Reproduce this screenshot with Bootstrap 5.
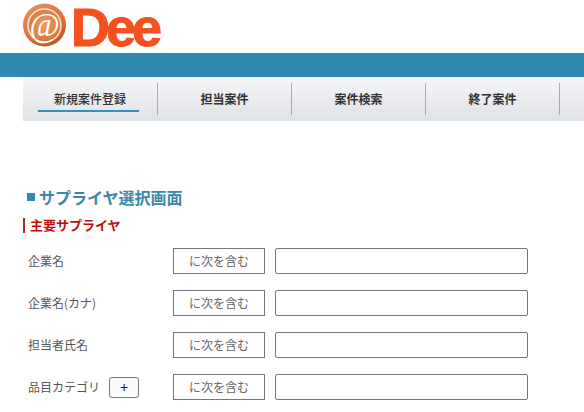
<!DOCTYPE html>
<html lang="ja">
<head>
  <meta charset="UTF-8" />
  <meta name="viewport" content="width=device-width, initial-scale=1.0"/>
  <title>サプライヤ選択画面</title>
  <link href="https://cdn.jsdelivr.net/npm/bootstrap@5.3.2/dist/css/bootstrap.min.css" rel="stylesheet">
  <style>
    body {
      font-family: "Noto Sans CJK JP", "Liberation Sans", sans-serif;
      color: #555;
      font-size: 12px;
      overflow: hidden;
    }
    .logo-area {
      height: 53px;
      padding: 3px 0 0 23px;
    }
    .logo-svg {
      overflow: visible;
    }
    .logo-text {
      font-family: "Liberation Sans", sans-serif;
      font-weight: 700;
      font-size: 54px;
      fill: #f4511e;
      stroke: #f4511e;
      stroke-width: 1px;
    }
    .top-band {
      height: 24px;
      background: #2e8aaf;
    }
    .menu-bar {
      margin-left: 23px;
      height: 44px;
      background: linear-gradient(#f5f6f8, #dfe2e6);
    }
    .menu-item {
      width: 134px;
      flex: none;
      height: 32px;
      margin-top: 6px;
      border-right: 1px solid #a9acaf;
      font-size: 12px;
      font-weight: 700;
      color: #333;
      text-align: center;
      line-height: 32px;
    }
    .menu-active {
      width: 135px;
      position: relative;
      font-weight: 500;
    }
    .menu-active::after {
      content: "";
      position: absolute;
      left: 15px;
      right: 18px;
      bottom: 3px;
      height: 2px;
      background: #3a8fb3;
    }
    .page-title {
      margin: 66px 0 0 27px;
      gap: 4px;
      font-size: 16px;
      line-height: 20px;
      font-weight: 700;
      color: #3a87a8;
    }
    .title-square {
      width: 8px;
      height: 8px;
      background: #2e8aaf;
    }
    .sub-title {
      margin: 11px 0 0 23px;
      padding: 0 0 1px 5px;
      border-left: 2px solid #b5261e;
      font-size: 13px;
      line-height: 14px;
      font-weight: 700;
      color: #c00d0d;
    }
    .search-rows {
      margin: 15px 0 0 28px;
      gap: 16px;
    }
    .search-row {
      height: 26px;
    }
    .field-name {
      width: 145px;
      flex: none;
      font-size: 12px;
      gap: 9px;
    }
    .plus-btn {
      width: 30px;
      height: 21px;
      padding: 0;
      font-size: 14px;
      line-height: 18px;
      color: #222;
      background: #fafafa;
      border: 1px solid #777;
      border-radius: 3px;
    }
    .cond-box {
      width: 92px;
      height: 26px;
      flex: none;
      margin-right: 10px;
      border: 1px solid #777;
      font-size: 12px;
      line-height: 24px;
      text-align: center;
      color: #666;
    }
    .text-box {
      width: 253px;
      height: 26px;
      padding: 0 4px;
      border: 1px solid #777;
      border-radius: 2px;
    }
  </style>
</head>
<body>

<div class="logo-area">
  <svg class="d-block logo-svg" width="140" height="46" viewBox="0 0 140 46">
    <defs>
      <linearGradient id="ball" x1="0.2" y1="0" x2="0.8" y2="1">
        <stop offset="0" stop-color="#e8915c"/>
        <stop offset="0.6" stop-color="#d96f33"/>
        <stop offset="1" stop-color="#b9521f"/>
      </linearGradient>
      <radialGradient id="ball-inner" cx="50%" cy="45%" r="55%">
        <stop offset="0" stop-color="#ee9a66"/>
        <stop offset="1" stop-color="#dd7638"/>
      </radialGradient>
    </defs>
    <circle cx="21.5" cy="22" r="21.5" fill="url(#ball)"/>
    <circle cx="21.5" cy="22.5" r="16.5" fill="url(#ball-inner)" stroke="#fbe6d6" stroke-width="1.5"/>
    <text x="21.5" y="33" font-family="Liberation Serif" font-style="italic" font-size="33" fill="#fff" text-anchor="middle">@</text>
    <text class="logo-text" x="48" y="43" textLength="91" lengthAdjust="spacing">Dee</text>
  </svg>
</div>

<div class="top-band"></div>

<nav class="menu-bar d-flex">
  <div class="menu-item menu-active">新規案件登録</div>
  <div class="menu-item">担当案件</div>
  <div class="menu-item">案件検索</div>
  <div class="menu-item">終了案件</div>
</nav>

<h1 class="page-title d-flex align-items-center"><span class="title-square"></span>サプライヤ選択画面</h1>
<div class="sub-title">主要サプライヤ</div>

<div class="search-rows d-flex flex-column">
  <div class="search-row d-flex align-items-center">
    <div class="field-name d-flex align-items-center">企業名</div>
    <div class="cond-box">に次を含む</div>
    <input type="text" class="text-box">
  </div>
  <div class="search-row d-flex align-items-center">
    <div class="field-name d-flex align-items-center">企業名(カナ)</div>
    <div class="cond-box">に次を含む</div>
    <input type="text" class="text-box">
  </div>
  <div class="search-row d-flex align-items-center">
    <div class="field-name d-flex align-items-center">担当者氏名</div>
    <div class="cond-box">に次を含む</div>
    <input type="text" class="text-box">
  </div>
  <div class="search-row d-flex align-items-center">
    <div class="field-name d-flex align-items-center">品目カテゴリ<button type="button" class="plus-btn">+</button></div>
    <div class="cond-box">に次を含む</div>
    <input type="text" class="text-box">
  </div>
</div>

<script src="https://cdn.jsdelivr.net/npm/bootstrap@5.3.2/dist/js/bootstrap.bundle.min.js"></script>
</body>
</html>
